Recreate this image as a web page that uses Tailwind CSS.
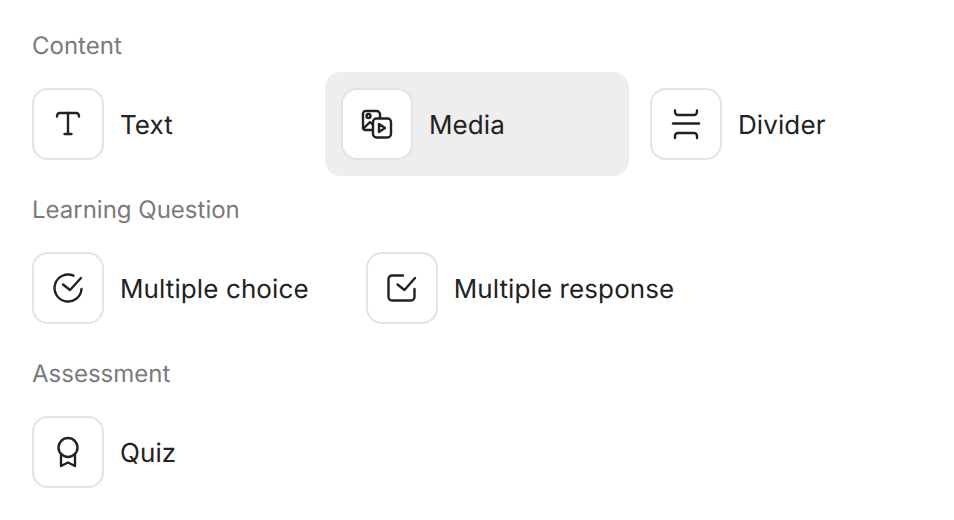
<!DOCTYPE html>
<html lang="en">
<head>
    <meta charset="UTF-8">
    <title>Add block</title>
    <script src="https://cdn.jsdelivr.net/npm/@tailwindcss/browser@4"></script>
</head>
<body class="bg-white font-['Inter',sans-serif] [text-rendering:geometricPrecision] text-[#222222] h-[520px] overflow-hidden">
    <div class="px-4 pt-[30px] flex flex-col gap-[18px]">
        <!-- Content -->
        <section>
            <h2 class="pl-4 mb-[10px] text-[24px] leading-8 font-normal text-[#7a7a7a]">Content</h2>
            <div class="grid grid-cols-[304px_304px_304px] gap-[5px]">
                <div class="flex items-center gap-4 p-4 rounded-2xl">
                    <div class="w-[72px] h-[72px] flex items-center justify-center bg-white border-2 border-[#e3e3e3] rounded-2xl">
                        <svg width="32" height="32" viewBox="0 0 32 32" fill="none" stroke="currentColor" stroke-width="2.4" stroke-linecap="round" stroke-linejoin="round"><path d="M5 8.500C5 6 5.600 5 8 5h16c2.400 0 3 1 3 3.500"/><path d="M16 5v21"/><path d="M12.500 26h7"/></svg>
                    </div>
                    <span class="text-[26px] leading-8 tracking-[0.1px] pt-1">Text</span>
                </div>
                <div class="flex items-center gap-4 p-4 rounded-2xl bg-[#eeeeee]">
                    <div class="w-[72px] h-[72px] flex items-center justify-center bg-white border-2 border-[#e3e3e3] rounded-2xl">
                        <svg width="32" height="32" viewBox="0 0 32 32" fill="none" stroke="currentColor" stroke-width="2.4" stroke-linecap="round" stroke-linejoin="round"><path d="M11 22H4.500A2.500 2.500 0 0 1 2 19.500V5.500A2.500 2.500 0 0 1 4.500 3h11A3.500 3.500 0 0 1 19 6.500V10"/><circle cx="7.500" cy="8" r="2"/><path d="M3 20l6-6 3 3"/><rect x="12" y="10.500" width="18" height="19" rx="3.500"/><path d="M18 16v8l6-4z"/></svg>
                    </div>
                    <span class="text-[26px] leading-8 tracking-[0.1px] pt-1">Media</span>
                </div>
                <div class="flex items-center gap-4 p-4 rounded-2xl">
                    <div class="w-[72px] h-[72px] flex items-center justify-center bg-white border-2 border-[#e3e3e3] rounded-2xl">
                        <svg width="32" height="32" viewBox="0 0 32 32" fill="none" stroke="currentColor" stroke-width="2.4" stroke-linecap="round" stroke-linejoin="round"><path d="M5 2.500V4a3 3 0 0 0 3 3h16a3 3 0 0 0 3-3V2.500"/><path d="M3 15.500h26"/><path d="M5 30v-2a3 3 0 0 1 3-3h16a3 3 0 0 1 3 3v2"/></svg>
                    </div>
                    <span class="text-[26px] leading-8 tracking-[0.1px] pt-1">Divider</span>
                </div>
            </div>
        </section>
        <!-- Learning Question -->
        <section>
            <h2 class="pl-4 mb-[10px] text-[24px] leading-8 font-normal text-[#7a7a7a]">Learning Question</h2>
            <div class="flex gap-[25px]">
                <div class="flex items-center gap-4 p-4 rounded-2xl">
                    <div class="w-[72px] h-[72px] flex items-center justify-center bg-white border-2 border-[#e3e3e3] rounded-2xl">
                        <svg width="32" height="32" viewBox="0 0 32 32" fill="none" stroke="currentColor" stroke-width="2.4" stroke-linecap="round" stroke-linejoin="round"><path d="M29.500 17A13.500 13.500 0 1 1 21.500 3.700"/><path d="M11 12.500l7 5.500L29 6"/></svg>
                    </div>
                    <span class="text-[26px] leading-8 tracking-[0.1px] pt-1">Multiple choice</span>
                </div>
                <div class="flex items-center gap-4 p-4 rounded-2xl">
                    <div class="w-[72px] h-[72px] flex items-center justify-center bg-white border-2 border-[#e3e3e3] rounded-2xl">
                        <svg width="32" height="32" viewBox="0 0 32 32" fill="none" stroke="currentColor" stroke-width="2.4" stroke-linecap="round" stroke-linejoin="round"><path d="M28.500 17v8a3.500 3.500 0 0 1-3.500 3.500H6A3.500 3.500 0 0 1 2.500 25V7A3.500 3.500 0 0 1 6 3.500h11"/><path d="M11.500 12.500l7 5.500L29 6"/></svg>
                    </div>
                    <span class="text-[26px] leading-8 tracking-[0.1px] pt-1">Multiple response</span>
                </div>
            </div>
        </section>
        <!-- Assessment -->
        <section>
            <h2 class="pl-4 mb-[10px] text-[24px] leading-8 font-normal text-[#7a7a7a]">Assessment</h2>
            <div class="flex">
                <div class="flex items-center gap-4 p-4 rounded-2xl">
                    <div class="w-[72px] h-[72px] flex items-center justify-center bg-white border-2 border-[#e3e3e3] rounded-2xl">
                        <svg width="32" height="32" viewBox="0 0 32 32" fill="none" stroke="currentColor" stroke-width="2.4" stroke-linecap="round" stroke-linejoin="round"><circle cx="16" cy="11.500" r="9.500"/><path d="M9 19v11l7-3.500 7 3.500V19"/></svg>
                    </div>
                    <span class="text-[26px] leading-8 tracking-[0.1px] pt-1">Quiz</span>
                </div>
            </div>
        </section>
    </div>
</body>
</html>
